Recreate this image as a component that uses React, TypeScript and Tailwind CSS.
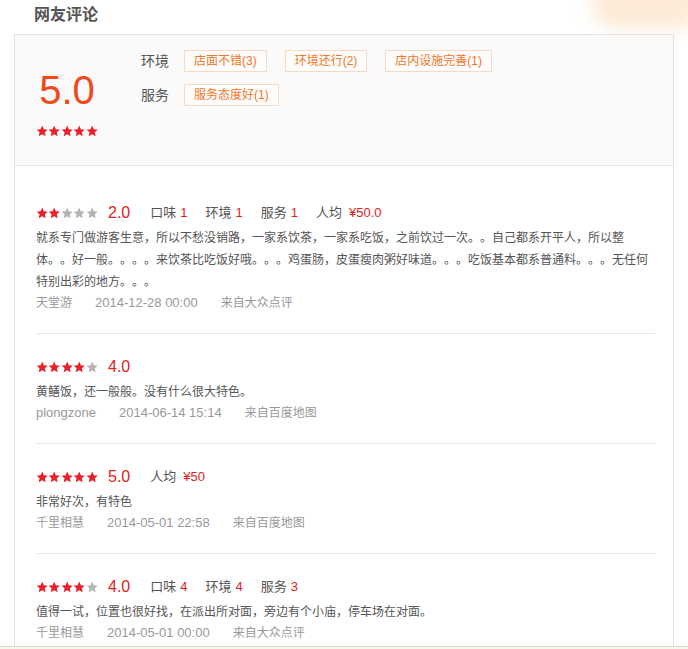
import React from 'react';

type Review = {
  score: number;
  details?: { label: string; value: string }[];
  text: string;
  user: string;
  date: string;
  source: string;
};

const REVIEWS: Review[] = [
  {
    score: 2,
    details: [
      { label: '口味', value: '1' },
      { label: '环境', value: '1' },
      { label: '服务', value: '1' },
      { label: '人均', value: '¥50.0' },
    ],
    text: '就系专门做游客生意，所以不愁没销路，一家系饮茶，一家系吃饭，之前饮过一次。。自己都系开平人，所以整体。。好一般。。。。来饮茶比吃饭好哦。。。鸡蛋肠，皮蛋瘦肉粥好味道。。。吃饭基本都系普通料。。。无任何特别出彩的地方。。。',
    user: '天堂游',
    date: '2014-12-28 00:00',
    source: '来自大众点评',
  },
  {
    score: 4,
    text: '黄鳝饭，还一般般。没有什么很大特色。',
    user: 'plongzone',
    date: '2014-06-14 15:14',
    source: '来自百度地图',
  },
  {
    score: 5,
    details: [{ label: '人均', value: '¥50' }],
    text: '非常好次，有特色',
    user: '千里相慧',
    date: '2014-05-01 22:58',
    source: '来自百度地图',
  },
  {
    score: 4,
    details: [
      { label: '口味', value: '4' },
      { label: '环境', value: '4' },
      { label: '服务', value: '3' },
    ],
    text: '值得一试，位置也很好找，在派出所对面，旁边有个小庙，停车场在对面。',
    user: '千里相慧',
    date: '2014-05-01 00:00',
    source: '来自大众点评',
  },
];

const TAGS = [
  { label: '环境', tags: ['店面不错(3)', '环境还行(2)', '店内设施完善(1)'] },
  { label: '服务', tags: ['服务态度好(1)'] },
];

const Stars: React.FC<{ n: number }> = ({ n }) => (
  <div className="flex h-[12px] w-[62px] shrink-0">
    {[0, 1, 2, 3, 4].map(i => (
      <svg key={i} viewBox="0 0 24 24" className="h-[12.4px] w-[12.4px]">
        <path
          d="M12 1.2l3.2 7 7.6.8-5.7 5.1 1.6 7.5L12 17.8l-6.7 3.8 1.6-7.5L1.2 9l7.6-.8z"
          fill={i < n ? '#e8212a' : '#b4b4b4'}
        />
      </svg>
    ))}
  </div>
);

const ReviewItem: React.FC<{ r: Review }> = ({ r }) => (
  <div className="pt-[23px] pb-[20px] border-b border-[#e6e6e6]">
    <div className="flex h-[20px] items-center">
      <Stars n={r.score} />
      <span className="ml-[10px] text-[16px] leading-[20px] text-[#e4201a]">{r.score.toFixed(1)}</span>
      {r.details && (
        <div className="ml-[20px] flex items-center gap-[18px] text-[13px] leading-[20px] text-[#555]">
          {r.details.map(d => (
            <span key={d.label}>
              {d.label}
              <span className={`${d.label === '人均' ? 'ml-[7px]' : 'ml-[4px]'} text-[#e4201a]`}>{d.value}</span>
            </span>
          ))}
        </div>
      )}
    </div>
    <p className="mt-[4px] w-[616px] text-[12px] leading-[22px] text-[#555]">{r.text}</p>
    <div className="flex h-[20px] items-center gap-[23px] text-[12px] leading-[20px] text-[#999]">
      <span className={r.user === 'plongzone' ? 'text-[13px]' : ''}>{r.user}</span>
      <span className="text-[13px]">{r.date}</span>
      <span>{r.source}</span>
    </div>
  </div>
);

export default function App() {
  return (
    <div className="relative flex h-[649px] w-[688px] flex-col overflow-hidden bg-white font-['Liberation_Sans','Noto_Sans_CJK_SC',sans-serif] [text-spacing-trim:space-all]">
      <div className="pointer-events-none absolute right-[-14px] top-[-22px] h-[50px] w-[110px] rounded-full bg-[#fde4cc] opacity-80 blur-[9px]" />

      <div className="flex-1 overflow-hidden">
        <h2 className="h-[34px] pl-[34px] pt-[5px] text-[16px] font-bold leading-[20px] text-[#555]">网友评论</h2>

        <div className="ml-[14px] h-full w-[660px] border-x border-t border-[#e3e3e3]">
          <div className="flex h-[131px] border-b border-[#e6e6e6] bg-[#fafafa]">
            <div className="ml-[21px] flex w-[62px] flex-col items-center pt-[35px]">
              <div className="text-[40px] leading-[40px] text-[#f04a1c]">5.0</div>
              <div className="mt-[15px]">
                <Stars n={5} />
              </div>
            </div>
            <div className="ml-[43px] flex flex-col gap-[12px] pt-[15px]">
              {TAGS.map(row => (
                <div key={row.label} className="flex h-[22px] items-center">
                  <span className="w-[43px] text-[14px] text-[#555]">{row.label}</span>
                  <div className="flex gap-[18px]">
                    {row.tags.map(t => (
                      <span
                        key={t}
                        className="flex h-[22px] items-center border border-[#f6dac4] bg-[#fffdfb] px-[9px] text-[12px] text-[#f0762a]"
                      >
                        {t}
                      </span>
                    ))}
                  </div>
                </div>
              ))}
            </div>
          </div>

          <div className="pl-[21px] pr-[18px] pt-[14px]">
            {REVIEWS.map((r, i) => (
              <ReviewItem key={i} r={r} />
            ))}
          </div>
        </div>
      </div>

      <div className="h-[3px] shrink-0 border-t border-[#d9d9cf] bg-[#f6f6ea]" />
    </div>
  );
}
